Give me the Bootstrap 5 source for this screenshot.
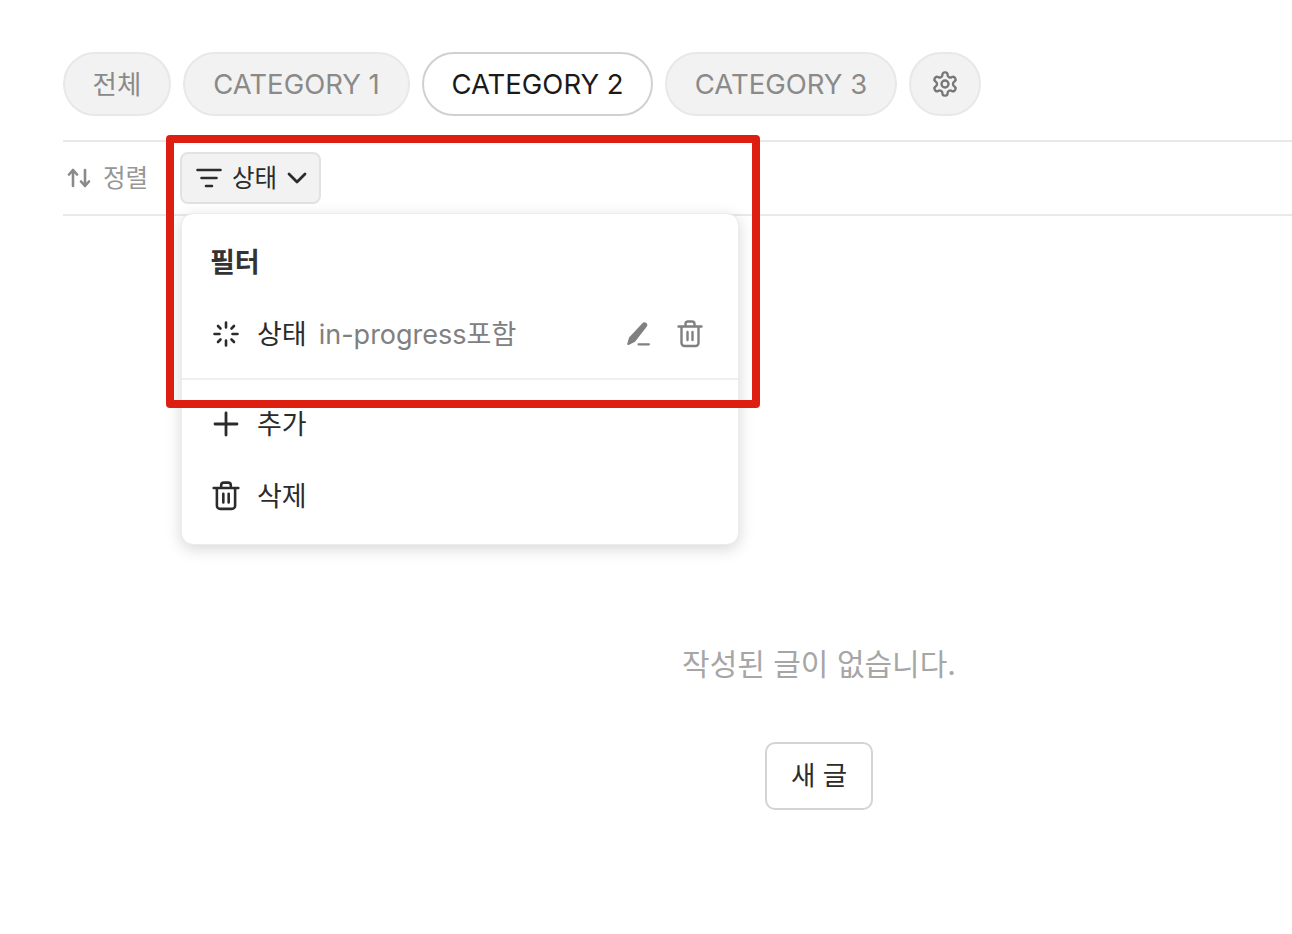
<!DOCTYPE html>
<html lang="ko">
<head>
  <meta charset="UTF-8" />
  <meta name="viewport" content="width=device-width, initial-scale=1.0"/>
  <title>글 목록</title>
  <link href="https://cdn.jsdelivr.net/npm/bootstrap@5.3.3/dist/css/bootstrap.min.css" rel="stylesheet">
  <style>
    html, body { height: 100%; margin: 0; overflow: hidden; }
    body { font-family: Inter, "Noto Sans CJK KR", sans-serif; background: #fff; color: #2b2b2b; }
    .page-wrap { position: relative; width: 1512px; margin-left: 63px; padding-top: 52px; }
    .tab-pill {
      height: 64px; padding: 1px 0 0; font-size: 27.500px; line-height: 1; color: #8a8a8a;
      background: #f2f2f2; border: 2px solid #e8e8e8; white-space: nowrap;
      display: flex; align-items: center; justify-content: center;
    }
    .tab-pill.is-on { background: #fff; border-color: #d0d0d0; color: #1a1a1a; }
    .tab-pill.tab-short { font-size: 26.500px; padding: 0; width: 108px; }
    .tab-pill.tab-one { width: 227px; }
    .tab-pill.tab-two { width: 231px; }
    .tab-pill.tab-three { width: 232px; }
    .tab-pill.tab-gear { padding: 0; width: 72px; }
    .tab-gap { gap: 12px; }
    .tool-bar { height: 76px; margin-top: 24px; border-top: 2px solid #e9e9e9; border-bottom: 2px solid #e9e9e9; }
    .sort-link { font-size: 24.500px; color: #969696; gap: 12px; padding-left: 4px; width: 117px; }
    .filter-wrap { position: relative; }
    .filter-btn {
      height: 52px; width: 141px; padding: 0 0 0 14px; font-size: 24.500px; line-height: 1; color: #2b2b2b;
      background: #f2f2f2; border: 2px solid #e2e2e2; border-radius: 8px; gap: 10px;
    }
    .filter-menu {
      top: 61px; left: 1px; width: 558px; height: 332px; padding: 0; margin: 0;
      border: 1px solid #ececec; border-radius: 12px; box-shadow: 0 4px 16px rgba(0,0,0,.16);
      font-size: 27px; color: #2b2b2b;
    }
    .menu-title { font-size: 27px; font-weight: 700; line-height: 1; color: #333; padding: 35px 28px 0; }
    .menu-row { height: 72px; padding: 0 35px 0 30px; gap: 17px; line-height: 1; }
    .menu-row.row-first { margin-top: 22px; }
    .menu-rule { margin: 8px 0; border-top: 2px solid #f0f0f0; opacity: 1; }
    .row-note { color: #808080; margin-left: -5px; }
    .row-tools { margin-left: auto; gap: 26px; }
    .empty-note { font-size: 30px; line-height: 1; color: #a6a6a6; margin-top: 433px; }
    .new-post {
      width: 108px; height: 68px; margin-top: 63px; padding: 0; font-size: 26.500px; color: #2b2b2b;
      background: #fff; border: 2px solid #d4d4d4; border-radius: 10px;
    }
    .mark-box {
      position: absolute; left: 103px; top: 135px; width: 594px; height: 273px; z-index: 1010;
      border: 8px solid #dc1f10; border-radius: 4px; pointer-events: none;
    }
  </style>
</head>
<body>
  <div class="page-wrap">
    <div class="d-flex tab-gap">
      <button class="btn tab-pill tab-short rounded-pill">전체</button>
      <button class="btn tab-pill tab-one rounded-pill">CATEGORY 1</button>
      <button class="btn tab-pill tab-two rounded-pill is-on">CATEGORY 2</button>
      <button class="btn tab-pill tab-three rounded-pill">CATEGORY 3</button>
      <button class="btn tab-pill rounded-pill tab-gear" aria-label="설정">
        <svg width="28" height="28" viewBox="0 0 24 24" fill="none" stroke="#777" stroke-width="2" stroke-linecap="round" stroke-linejoin="round"><path d="M12.22 2h-.44a2 2 0 0 0-2 2v.18a2 2 0 0 1-1 1.73l-.43.25a2 2 0 0 1-2 0l-.15-.08a2 2 0 0 0-2.73.73l-.22.38a2 2 0 0 0 .73 2.73l.15.1a2 2 0 0 1 1 1.72v.51a2 2 0 0 1-1 1.74l-.15.09a2 2 0 0 0-.73 2.73l.22.38a2 2 0 0 0 2.73.73l.15-.08a2 2 0 0 1 2 0l.43.25a2 2 0 0 1 1 1.73V20a2 2 0 0 0 2 2h.44a2 2 0 0 0 2-2v-.18a2 2 0 0 1 1-1.73l.43-.25a2 2 0 0 1 2 0l.15.08a2 2 0 0 0 2.73-.73l.22-.39a2 2 0 0 0-.73-2.73l-.15-.08a2 2 0 0 1-1-1.74v-.5a2 2 0 0 1 1-1.74l.15-.09a2 2 0 0 0 .73-2.73l-.22-.38a2 2 0 0 0-2.73-.73l-.15.08a2 2 0 0 1-2 0l-.43-.25a2 2 0 0 1-1-1.73V4a2 2 0 0 0-2-2z"/><circle cx="12" cy="12" r="3"/></svg>
      </button>
    </div>

    <div class="tool-bar d-flex align-items-center">
      <div class="sort-link d-flex align-items-center">
        <svg width="24" height="20" viewBox="0 0 24 20" fill="none" stroke="#8a8a8a" stroke-width="2.600" stroke-linecap="round" stroke-linejoin="round"><path d="M6 18V2M2 6.500L6 2l4 4.500"/><path d="M18 2v16M14 13.500l4 4.500 4-4.500"/></svg>
        <span>정렬</span>
      </div>
      <div class="filter-wrap">
        <button class="btn filter-btn d-flex align-items-center">
          <svg width="26" height="20" viewBox="0 0 26 20" fill="none" stroke="#2b2b2b" stroke-width="2.600" stroke-linecap="round"><path d="M1.500 2h23M5.500 10h15M10 18h6"/></svg>
          <span>상태</span>
          <svg width="20" height="12" viewBox="0 0 20 12" fill="none" stroke="#2b2b2b" stroke-width="2.800" stroke-linecap="round" stroke-linejoin="round"><path d="M2 2l8 8 8-8"/></svg>
        </button>
        <div class="dropdown-menu show filter-menu">
          <div class="menu-title">필터</div>
          <div class="menu-row row-first d-flex align-items-center">
            <svg width="28" height="28" viewBox="0 0 28 28" fill="none" stroke="#2b2b2b" stroke-width="2.600" stroke-linecap="round"><path d="M14 2.500v5M14 20.500v5M2.500 14h5M20.500 14h5M6 6l2.500 2.500M19.500 19.500L22 22M6 22l2.500-2.500M19.500 8.500L22 6"/></svg>
            <span>상태</span>
            <span class="row-note">in-progress포함</span>
            <div class="row-tools d-flex align-items-center">
              <svg width="27" height="27" viewBox="0 0 26 26" fill="#808080" stroke="none"><path d="M17.500 2.500a2.600 2.600 0 0 1 4.500 2.700L11 19.500a3 3 0 0 1-1.300 1L4.500 23a1 1 0 0 1-1.400-1.200l1.600-5.300a3 3 0 0 1 .6-1.100z"/><rect x="13" y="21.500" width="12" height="2" rx="1"/></svg>
              <svg width="26" height="28" viewBox="0 0 26 28" fill="none" stroke="#808080" stroke-width="2.400" stroke-linecap="round" stroke-linejoin="round"><path d="M1.500 6.500h23M4.500 6.500V23a3 3 0 0 0 3 3h11a3 3 0 0 0 3-3V6.500M8.500 6.500V4a2.500 2.500 0 0 1 2.500-2.500h4A2.500 2.500 0 0 1 17.500 4v2.500M10.500 12v8M15.500 12v8"/></svg>
            </div>
          </div>
          <hr class="dropdown-divider menu-rule">
          <div class="menu-row d-flex align-items-center">
            <svg width="28" height="28" viewBox="0 0 28 28" fill="none" stroke="#2b2b2b" stroke-width="2.800" stroke-linecap="round"><path d="M14 3v22M3 14h22"/></svg>
            <span>추가</span>
          </div>
          <div class="menu-row d-flex align-items-center">
            <svg width="28" height="30" viewBox="0 0 26 28" fill="none" stroke="#2b2b2b" stroke-width="2.400" stroke-linecap="round" stroke-linejoin="round"><path d="M1.500 6.500h23M4.500 6.500V23a3 3 0 0 0 3 3h11a3 3 0 0 0 3-3V6.500M8.500 6.500V4a2.500 2.500 0 0 1 2.500-2.500h4A2.500 2.500 0 0 1 17.500 4v2.500M10.500 12v8M15.500 12v8"/></svg>
            <span>삭제</span>
          </div>
        </div>
      </div>
    </div>

    <div class="d-flex flex-column align-items-center">
      <div class="empty-note">작성된 글이 없습니다.</div>
      <button class="btn new-post">새 글</button>
    </div>

    <div class="mark-box"></div>
  </div>
  <script src="https://cdn.jsdelivr.net/npm/bootstrap@5.3.3/dist/js/bootstrap.bundle.min.js"></script>
</body>
</html>
